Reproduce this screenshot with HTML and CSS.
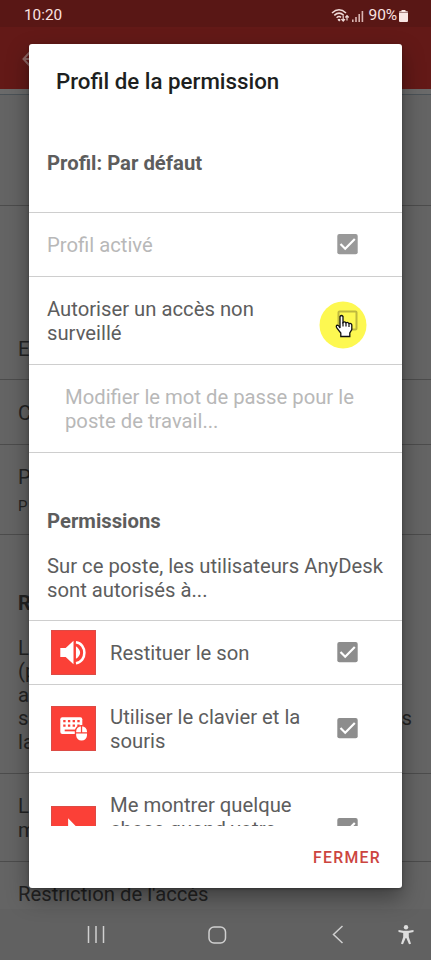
FILE: index.html
```html
<!DOCTYPE html>
<html lang="fr">
<head>
<meta charset="utf-8">
<title>Profil de la permission</title>
<link rel="stylesheet" href="styles.css">
</head>
<body>
<div class="phone">
  <header class="status">
    <span class="time">10:20</span>
    <div class="indicators">
      <svg width="19" height="15" viewBox="0 0 19 15" fill="none" stroke="#f0dad8" stroke-width="1.5">
        <path d="M1 5Q8 -1.5 15 5M3.3 7.4Q8 3 12.7 7.2M5.6 9.7Q8 7.6 10 9.4"/>
        <path d="M7 11.2l1.2 1.2 1-1" fill="#f0dad8"/>
        <path d="M12.2 7.5v5.5M10.4 11.2l1.8 2 1.8-2M16 12.5V7.8M14.4 9.5L16 7.6l1.7 1.9" stroke-width="1.2"/>
      </svg>
      <svg class="signal" width="12" height="12" viewBox="0 0 12 12" fill="#d9b5b2"><path d="M0 9.5h1.6V12H0zM3.2 7h1.6v5H3.2zM6.4 4H8v8H6.4zM9.6 1h1.6v11H9.6z"/></svg>
      <span class="percent">90%</span>
      <svg class="battery" width="9" height="12" viewBox="0 0 9 12"><path fill="#f8e6e4" d="M2.5 0h4v1.2H8q1 0 1 1V11q0 1-1 1H1q-1 0-1-1V2.200q0-1 1-1h1.500z"/><path stroke="#a98482" d="M0 2.500h9"/></svg>
    </div>
  </header>
  <div class="appbar">
    <svg width="18" height="16" viewBox="0 0 18 16" fill="none" stroke="#8e6664" stroke-width="2"><path d="M8 1L1.500 8 8 15M2 8h16"/></svg>
  </div>
  <main class="settings">
    <div class="strip"></div>
    <div class="item blank"></div>
    <div class="item enable">E</div>
    <div class="item code">C</div>
    <div class="item profile">P<small>P</small></div>
    <div class="item remote"><b>R</b>
      <p>L<br>(p<br>a<br><span class="ends"><span>s</span><span>s</span></span>la</p>
    </div>
    <div class="item lock">L<br>m</div>
    <div class="restrict">Restriction de l'accès</div>
  </main>
  <nav class="navbar">
    <svg width="18" height="18" viewBox="0 0 18 18" stroke="#d0d0d0" stroke-width="1.500"><path d="M1.500 0v17M9 0v17M16.500 0v17"/></svg>
    <svg width="19" height="18" viewBox="0 0 19 18" fill="none" stroke="#d0d0d0" stroke-width="1.500"><rect x="1" y="1" width="16.500" height="16" rx="5"/></svg>
    <svg width="12" height="19" viewBox="0 0 12 19" fill="none" stroke="#d0d0d0" stroke-width="1.500"><path d="M10.500 1L1.500 9.500l9 8.500"/></svg>
    <svg width="16" height="20" viewBox="0 0 16 20" fill="#dedede"><circle cx="8" cy="2.300" r="2.200"/><path d="M.5 5L5.500 5.700h5L15.500 5v2l-4.700 1v4l2.200 6.700-2 .6-2.700-6.300h-.6L5 19.300l-2-.6L5.200 12V8L.5 7z"/></svg>
  </nav>

  <section class="dialog">
    <h1>Profil de la permission</h1>
    <div class="list">
      <h2 class="current">Profil: Par défaut</h2>
      <div class="row short disabled"><span>Profil activé</span>
        <svg class="check" width="21" height="21" viewBox="0 0 21 21"><rect x=".3" width="20.400" height="20.200" rx="2" fill="#999"/><path d="M3.500 10l4.700 4.700L17.800 5" fill="none" stroke="#fff" stroke-width="2.200"/></svg>
      </div>
      <div class="row"><span>Autoriser un accès non<br>surveillé</span>
        <div class="target">
          <svg width="48" height="48" viewBox="0 0 48 48">
            <circle cx="24" cy="24" r="23.500" fill="#fdf851"/>
            <rect x="19.500" y="10.500" width="18" height="18" rx="1" fill="none" stroke="#beb83e" stroke-width="2"/>
            <path d="M21 27V15.500q1.500-2 3 0v6q1.500-1.300 3 .3 1.800-1.100 3 .8 2.300-.7 2.800 1.400v4.500l-2 3.500v3.500h-9V32l-3.800-4.800q-1.500-2.500.2-3 1.300-.2 2.800 2.800z" fill="#fff" stroke="#111" stroke-width="1.300"/>
            <path d="M24 21v4.500M27 21.500v4M30 22.500v3.500" stroke="#111" stroke-width="1.200"/>
          </svg>
        </div>
      </div>
      <div class="row sub disabled"><span>Modifier le mot de passe pour le<br>poste de travail...</span></div>
      <div class="intro">
        <h2>Permissions</h2>
        <p>Sur ce poste, les utilisateurs AnyDesk<br>sont autorisés à...</p>
      </div>
      <div class="row short perm">
        <svg class="tile" width="45" height="45" viewBox="0 0 46 46"><rect x=".5" y=".5" width="45" height="45" fill="#fb4037" stroke="#dc4a44"/><path d="M9.500 18.500h5.500L23 11v24l-8-7.500H9.500zM25.500 16.500q8.500 6.500 0 13z" fill="#fff"/><path d="M25.500 12.500c11.500 1.500 11.500 20 0 21.500" fill="none" stroke="#fff" stroke-width="2.600"/></svg>
        <span>Restituer le son</span>
        <svg class="check" width="21" height="21" viewBox="0 0 21 21"><rect x=".3" width="20.400" height="20.200" rx="2" fill="#8d8d8d"/><path d="M3.500 10l4.700 4.700L17.800 5" fill="none" stroke="#fff" stroke-width="2.200"/></svg>
      </div>
      <div class="row perm">
        <svg class="tile" width="45" height="45" viewBox="0 0 46 46"><rect x=".5" y=".5" width="45" height="45" fill="#fb4037" stroke="#dc4a44"/><rect x="9.500" y="11.500" width="22.500" height="17" rx="2" fill="#fff"/><path d="M12.500 15.500h17M12.500 20h17" stroke="#fb4037" stroke-width="2.400" stroke-dasharray="2.400 2.400"/><path d="M14 25h13" stroke="#fb4037" stroke-width="1.800"/><rect x="25" y="20" width="12.500" height="16" rx="6" fill="#fff" stroke="#fb4037" stroke-width="1.400"/><path d="M25 27.500h12.500M31.200 20v7.500" stroke="#fb4037" stroke-width="1.300"/></svg>
        <span>Utiliser le clavier et la<br>souris</span>
        <svg class="check" width="21" height="21" viewBox="0 0 21 21"><rect x=".3" width="20.400" height="20.200" rx="2" fill="#8d8d8d"/><path d="M3.500 10l4.700 4.700L17.800 5" fill="none" stroke="#fff" stroke-width="2.200"/></svg>
      </div>
      <div class="row tall perm">
        <svg class="tile" width="45" height="45" viewBox="0 0 46 46"><rect x=".5" y=".5" width="45" height="45" fill="#fb4037" stroke="#dc4a44"/><path d="M17.500 12.500v22l5-5 4 8 3-1.500-4-8h7z" fill="#fff"/></svg>
        <span>Me montrer quelque<br>chose quand votre</span>
        <svg class="check" width="21" height="21" viewBox="0 0 21 21"><rect x=".3" width="20.400" height="20.200" rx="2" fill="#8d8d8d"/><path d="M3.500 10l4.700 4.700L17.800 5" fill="none" stroke="#fff" stroke-width="2.200"/></svg>
      </div>
    </div>
    <footer><button>FERMER</button></footer>
  </section>
</div>
</body>
</html>
```
FILE: styles.css
```css
* { box-sizing: border-box; }
body { margin: 0; font-family: Roboto, sans-serif; }
.phone {
  position: relative;
  width: 431px;
  height: 960px;
  overflow: hidden;
  display: flex;
  flex-direction: column;
  background: #646464;
  color: #232323;
  font-size: 20.25px;
  line-height: 23.6px;
}
.status {
  height: 27px;
  flex: none;
  background: #591715;
  display: flex;
  justify-content: space-between;
  padding: 4px 23px 0 24px;
  color: #fbe3e1;
  font-size: 15.300px;
}
.indicators { display: flex; align-items: center; height: 23px; }
.signal { margin-left: 2px; }
.percent { margin-left: 5px; font-size: 15.500px; letter-spacing: -.1px; }
.battery { margin-left: 2px; }
.appbar { height: 62px; flex: none; background: #631917; padding: 22px; }
.settings { flex: 1; min-height: 0; display: flex; flex-direction: column; overflow: hidden; }
.strip { height: 6px; flex: none; border-bottom: 1px solid #4b5257; background: #6a6a6a; }
.item { flex: none; padding-left: 18px; border-bottom: 1px solid #4c4c4c; }
.blank { height: 111px; }
.enable { height: 174px; padding-top: 132px; }
.code { height: 65px; padding-top: 22px; }
.profile { height: 90px; padding-top: 21px; }
.profile small { display: block; font-size: 15px; margin-top: 5px; }
.remote { height: 239px; padding-top: 57px; }
.remote p { margin: 21px 0 0; }
.ends { display: flex; justify-content: space-between; padding-right: 19px; }
.lock { height: 88px; padding-top: 21px; }
.restrict { padding: 21px 0 0 18px; }
.navbar {
  height: 51px;
  flex: none;
  background: #616161;
  display: flex;
  align-items: center;
  padding: 0 17px 0 87px;
}
.navbar svg:nth-child(2) { margin-left: 103px; }
.navbar svg:nth-child(3) { margin-left: 105px; }
.navbar svg:nth-child(4) { margin-left: auto; }
.dialog {
  position: absolute;
  left: 29px;
  top: 44px;
  width: 373px;
  height: 844px;
  border-radius: 3px;
  background: #fff;
  color: #5d5d5d;
  box-shadow: 0 10px 22px rgba(0, 0, 0, .38), 0 1px 3px rgba(0, 0, 0, .3);
  display: flex;
  flex-direction: column;
}
h1, h2, p { margin: 0; }
h1 {
  height: 80px;
  flex: none;
  padding: 24px 0 0 27px;
  font-size: 22.3px;
  line-height: 27px;
  font-weight: 500;
  color: #1d1f20;
}
h2 { font-size: 20.3px; line-height: 24px; font-weight: 700; }
.list { height: 702px; flex: none; overflow: hidden; }
.current { height: 89px; padding: 27px 0 0 18px; border-bottom: 1px solid #cecece; }
.row {
  height: 88px;
  display: flex;
  align-items: center;
  padding: 2px 44px 0 18px;
  border-bottom: 1px solid #cecece;
}
.row.short { height: 64px; }
.row.tall { height: 112px; }
.row.tall span { align-self: flex-start; padding-top: 19px; }
.row span { flex: 1; white-space: nowrap; }
.check { flex: none; position: relative; top: -1px; }
.disabled { color: #b8b8b8; }
.sub { padding-left: 36px; }
.target { width: 48px; height: 48px; margin: 6px -9px 0 0; }
.target svg { display: block; }
.intro { height: 168px; padding: 56px 0 0 18px; border-bottom: 1px solid #cecece; }
.intro p { margin-top: 22px; white-space: nowrap; }
.perm { padding-left: 22px; gap: 14px; }
.tile { flex: none; position: relative; top: -1px; }
footer { flex: 1; display: flex; justify-content: flex-end; align-items: center; padding-right: 21px; }
button {
  border: 0;
  padding: 0;
  background: none;
  color: #cc4540;
  font: 500 15.800px Roboto, sans-serif;
  letter-spacing: 1.300px;
}
```
